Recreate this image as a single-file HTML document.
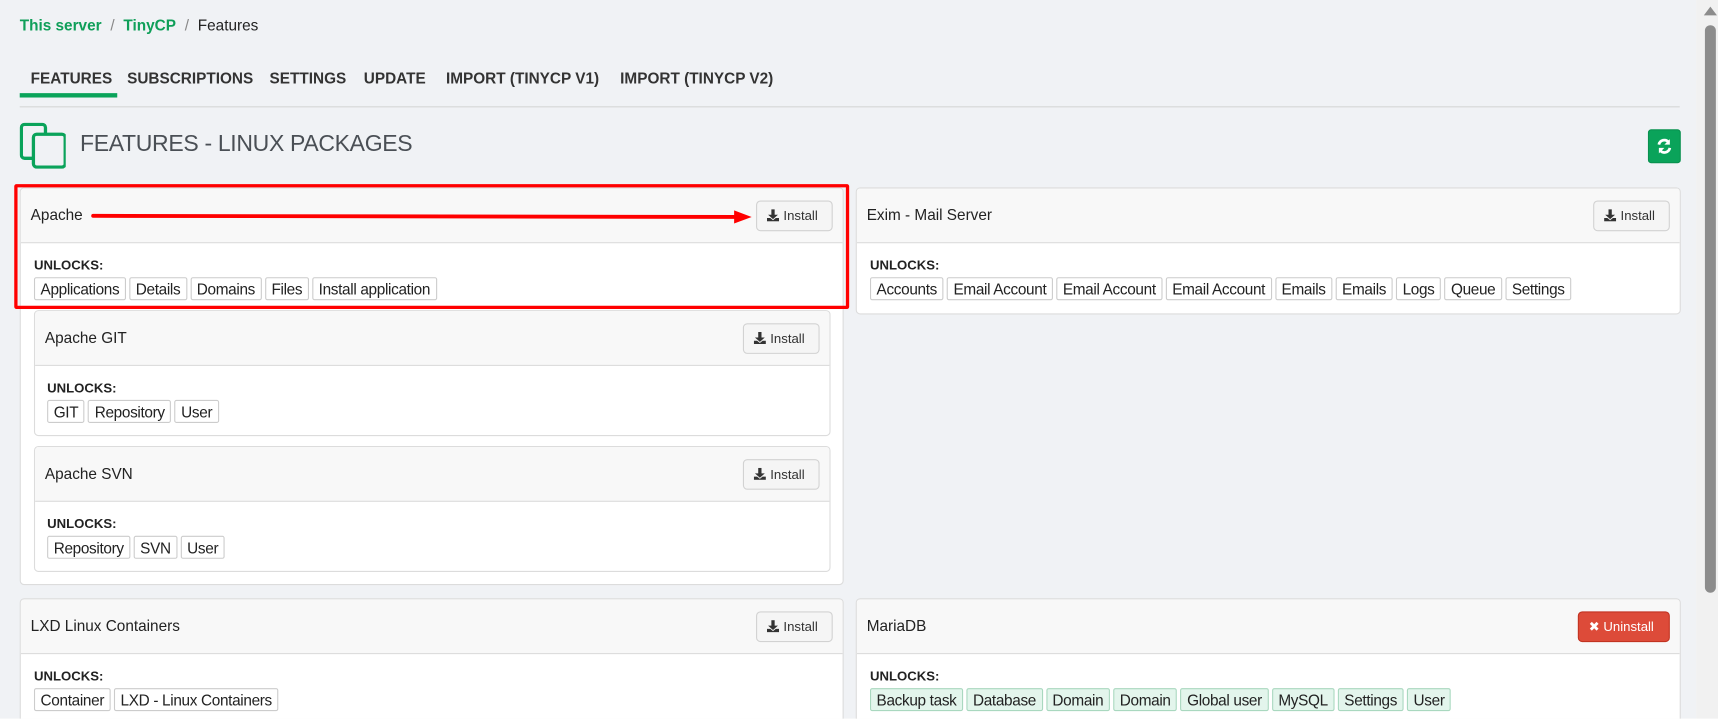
<!DOCTYPE html>
<html><head><meta charset="utf-8"><style>
*{box-sizing:border-box;margin:0;padding:0}
body{width:1718px;height:719px;overflow:hidden;background:#fff;font-family:"Liberation Sans",sans-serif;color:#222;position:relative}
#wrap{position:absolute;left:0;top:0;width:1568px;height:656px;transform:scale(1.0957);transform-origin:0 0;overflow:hidden}
#main{position:absolute;left:0;top:0;width:1548px;height:656px;background:#f0f2f5;overflow:hidden}
#sb{position:absolute;left:1548px;top:0;width:22px;height:656px;background:#f1f1f1}
#sb .th{position:absolute;left:8px;top:23px;width:10px;height:518px;border-radius:5px;background:#8c8c8c}
#sb .ar{position:absolute;left:7px;top:6px;width:0;height:0;border-left:6px solid transparent;border-right:6px solid transparent;border-bottom:8px solid #8c8c8c}
.a{position:absolute}
.bc{left:18px;top:15px;font-size:14px}
.bc .g{color:#0f9f59;font-weight:bold}
.bc .s{color:#888;margin:0 8px}
.tabs{left:18px;top:63px;width:1515px;height:35px;border-bottom:1px solid #d5d5d5;font-size:14px;font-weight:bold;color:#333}
.tabs span{position:absolute;top:0}
.ul{left:18px;top:85px;width:89px;height:4px;background:#0aa35a}
.title{left:73px;top:120px;font-size:21px;color:#4a4f55;letter-spacing:-0.3px}
.refresh{left:1504px;top:118px;width:30px;height:31px;background:#0aa35a;border-radius:3px;border:1px solid #08914f}
.card{position:absolute;background:#fff;border:1px solid #dcdcdc;border-radius:4px;overflow:hidden}
.hd{height:50px;background:#f8f8f8;border-bottom:1px solid #dcdcdc;font-size:14px;padding:16px 0 0 9px;position:relative}
.bd{padding:13px 0 0 12px}
.ul2{font-size:12px;font-weight:bold;margin-bottom:4px}
.tags{display:flex;gap:3px}
.tags span{border:1px solid #ccc;border-radius:2px;font-size:14px;letter-spacing:-0.3px;padding:1px 5px;height:21px;line-height:18px;background:#fff}
.tags.gr span{background:#e3f5ec;border-color:#a9d8bf}
.btn{position:absolute;right:9px;top:11px;width:70px;height:28px;border:1px solid #d2d2d2;border-radius:4px;background:#f5f5f5;font-size:12px;padding:6px 0 0 9px;color:#333}
.btn svg{vertical-align:-1px;margin-right:4px}
.un{width:84px;background:#dd4b39;border-color:#c23321;color:#fff;padding-left:9px}
</style></head><body>
<div id="wrap">
<div id="main">
<div class="a bc"><span class="g">This server</span><span class="s">/</span><span class="g">TinyCP</span><span class="s">/</span><span>Features</span></div>
<div class="a tabs"><span style="left:10px">FEATURES</span><span style="left:98px">SUBSCRIPTIONS</span><span style="left:228px">SETTINGS</span><span style="left:314px">UPDATE</span><span style="left:389px">IMPORT (TINYCP V1)</span><span style="left:548px">IMPORT (TINYCP V2)</span></div>
<div class="a ul"></div>
<svg class="a" style="left:18px;top:112px" width="42" height="42"><rect x="1.5" y="1.5" width="22" height="31" rx="3" fill="none" stroke="#0aa35a" stroke-width="3"/><rect x="12.5" y="10.5" width="29" height="30" rx="3" fill="#f0f2f5" stroke="#0aa35a" stroke-width="3"/></svg>
<div class="a title">FEATURES - LINUX PACKAGES</div>
<div class="a refresh"><svg width="28" height="29" viewBox="0 0 28 29"><path d="M9 13a5 5 0 0 1 9-2" stroke="#fff" stroke-width="2.5" fill="none"/><path d="M19 8v5h-5z" fill="#fff"/><path d="M19 16a5 5 0 0 1-9 2" stroke="#fff" stroke-width="2.5" fill="none"/><path d="M9 21v-5h5z" fill="#fff"/></svg></div>

<div class="card" style="left:18px;top:171px;width:752px;height:363px">
 <div class="hd">Apache<div class="btn"><svg width="11" height="11"><path d="M4 0h3v5h3l-4.5 4L1 5h3z M0 8h3l2.5 2 2.5-2h3v3H0z" fill="#333"/></svg>Install</div></div>
 <div class="bd"><div class="ul2">UNLOCKS:</div><div class="tags"><span>Applications</span><span>Details</span><span>Domains</span><span>Files</span><span>Install application</span></div></div>
 <div class="card" style="left:12px;top:111px;width:727px;height:115px">
  <div class="hd">Apache GIT<div class="btn"><svg width="11" height="11"><path d="M4 0h3v5h3l-4.5 4L1 5h3z M0 8h3l2.5 2 2.5-2h3v3H0z" fill="#333"/></svg>Install</div></div>
  <div class="bd" style="padding-left:11px"><div class="ul2">UNLOCKS:</div><div class="tags"><span>GIT</span><span>Repository</span><span>User</span></div></div>
 </div>
 <div class="card" style="left:12px;top:235px;width:727px;height:115px">
  <div class="hd">Apache SVN<div class="btn"><svg width="11" height="11"><path d="M4 0h3v5h3l-4.5 4L1 5h3z M0 8h3l2.5 2 2.5-2h3v3H0z" fill="#333"/></svg>Install</div></div>
  <div class="bd" style="padding-left:11px"><div class="ul2">UNLOCKS:</div><div class="tags"><span>Repository</span><span>SVN</span><span>User</span></div></div>
 </div>
</div>

<div class="card" style="left:781px;top:171px;width:753px;height:116px">
 <div class="hd">Exim - Mail Server<div class="btn"><svg width="11" height="11"><path d="M4 0h3v5h3l-4.5 4L1 5h3z M0 8h3l2.5 2 2.5-2h3v3H0z" fill="#333"/></svg>Install</div></div>
 <div class="bd"><div class="ul2">UNLOCKS:</div><div class="tags"><span>Accounts</span><span>Email Account</span><span>Email Account</span><span>Email Account</span><span>Emails</span><span>Emails</span><span>Logs</span><span>Queue</span><span>Settings</span></div></div>
</div>

<div class="card" style="left:18px;top:546px;width:752px;height:200px">
 <div class="hd">LXD Linux Containers<div class="btn"><svg width="11" height="11"><path d="M4 0h3v5h3l-4.5 4L1 5h3z M0 8h3l2.5 2 2.5-2h3v3H0z" fill="#333"/></svg>Install</div></div>
 <div class="bd"><div class="ul2">UNLOCKS:</div><div class="tags"><span>Container</span><span>LXD - Linux Containers</span></div></div>
</div>
<div class="card" style="left:781px;top:546px;width:753px;height:200px">
 <div class="hd">MariaDB<div class="btn un">✖ Uninstall</div></div>
 <div class="bd"><div class="ul2">UNLOCKS:</div><div class="tags gr"><span>Backup task</span><span>Database</span><span>Domain</span><span>Domain</span><span>Global user</span><span>MySQL</span><span>Settings</span><span>User</span></div></div>
</div>

<div class="a" style="left:13px;top:168px;width:762px;height:114px;border:3px solid #f00;border-radius:2px"></div>
<svg class="a" style="left:80px;top:188px" width="610" height="20"><line x1="5" y1="9" x2="592" y2="10" stroke="#f00" stroke-width="3.5" stroke-linecap="round"/><path d="M590 4l16 6-16 6z" fill="#f00"/></svg>
</div>
<div id="sb"><div class="ar"></div><div class="th"></div></div>
</div>
</body></html>
